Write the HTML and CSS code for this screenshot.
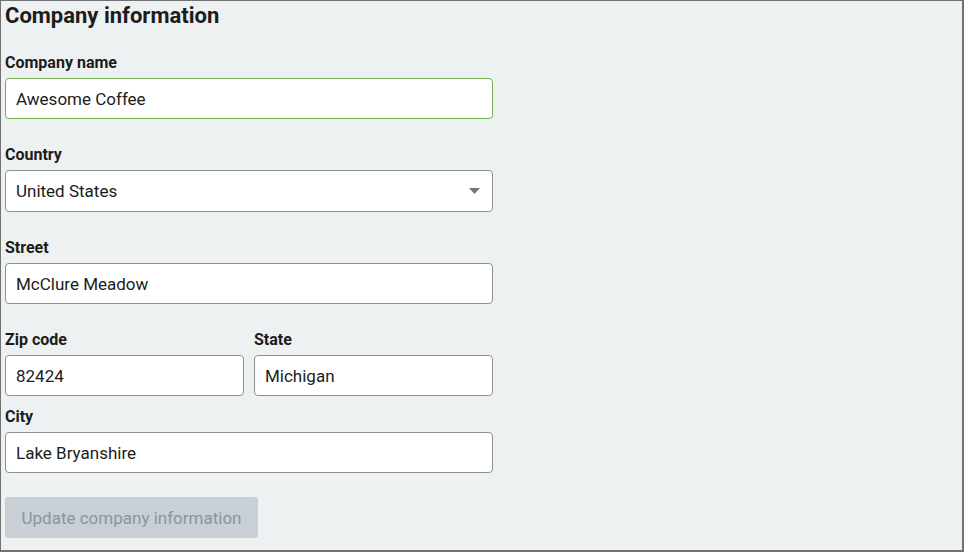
FILE: index.html
```html
<!DOCTYPE html>
<html lang="en">
<head>
    <meta charset="UTF-8">
    <title>Company information</title>
    <link rel="stylesheet" href="styles.css">
</head>
<body>
    <div class="frame">
        <h1>Company information</h1>
        <form class="company-form">
            <div class="form-group">
                <label for="name">Company name</label>
                <input type="text" id="name" class="valid" value="Awesome Coffee">
            </div>
            <div class="form-group">
                <label for="country">Country</label>
                <div class="select">
                    <span>United States</span>
                    <svg width="11" height="6" viewBox="0 0 11 6"><path d="M0 0h11L5.5 6z" fill="#777"/></svg>
                </div>
            </div>
            <div class="form-group">
                <label for="street">Street</label>
                <input type="text" id="street" value="McClure Meadow">
            </div>
            <div class="form-row">
                <div class="form-group">
                    <label for="zip">Zip code</label>
                    <input type="text" id="zip" value="82424">
                </div>
                <div class="form-group">
                    <label for="state">State</label>
                    <input type="text" id="state" value="Michigan">
                </div>
            </div>
            <div class="form-group last">
                <label for="city">City</label>
                <input type="text" id="city" value="Lake Bryanshire">
            </div>
            <button type="button" disabled>Update company information</button>
        </form>
    </div>
</body>
</html>
```

FILE: styles.css
```css
body {
    margin: 0;
    font-family: Roboto, "Liberation Sans", sans-serif;
    color: #1c1c1c;
}
.frame {
    box-sizing: border-box;
    width: 964px;
    height: 552px;
    background: #eef1f2;
    border-style: solid;
    border-color: #6f7273;
    border-width: 1px 2px 2px 1px;
    padding: 1px 4px;
}
h1 {
    margin: 0 0 22px;
    font-size: 22px;
    line-height: 28px;
    font-weight: 700;
}
.company-form {
    width: 488px;
}
.form-group {
    margin-bottom: 25px;
}
.form-group.last {
    margin-bottom: 0;
}
.form-row {
    display: flex;
    gap: 10px;
    margin-bottom: 10px;
}
.form-row .form-group {
    flex: 1;
    margin-bottom: 0;
}
label {
    display: block;
    font-size: 16px;
    font-weight: 700;
    line-height: 22px;
    margin-bottom: 4px;
}
input, .select {
    display: block;
    box-sizing: border-box;
    width: 100%;
    height: 41px;
    padding: 0 10px;
    border: 1px solid #8e9193;
    border-radius: 4px;
    background: #fff;
    font-family: inherit;
    font-size: 17px;
    color: #1c1c1c;
}
input.valid {
    border-color: #75ad55;
}
.select {
    display: flex;
    align-items: center;
    justify-content: space-between;
    height: 42px;
    padding-right: 12px;
}
button {
    display: block;
    margin-top: 24px;
    width: 253px;
    height: 41px;
    border: none;
    border-radius: 3px;
    background: #c8d0d5;
    color: #8a959e;
    font-family: inherit;
    font-size: 17px;
    padding: 0;
}
```
